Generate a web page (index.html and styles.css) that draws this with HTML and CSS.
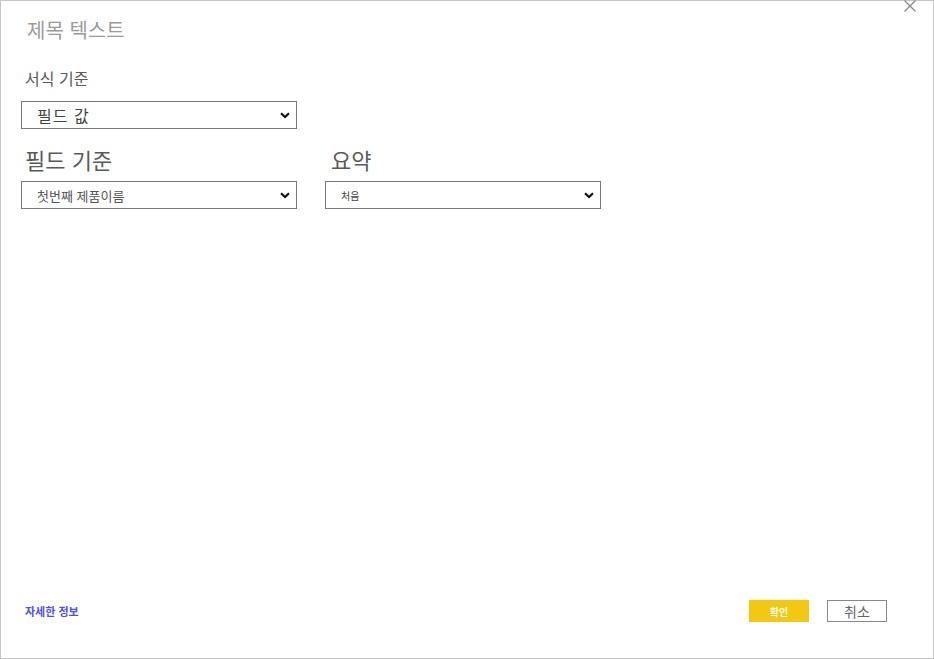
FILE: index.html
```html
<!DOCTYPE html>
<html lang="ko">
<head>
<meta charset="utf-8">
<link rel="stylesheet" href="styles.css">
</head>
<body>
<div class="dialog">
  <button class="close" aria-label="닫기">
    <svg width="12" height="12" viewBox="0 0 12 12"><path d="M0.5 0.5 L11.5 11.5 M11.5 0.5 L0.5 11.5" stroke="#888" stroke-width="1.3" fill="none"/></svg>
  </button>
  <h1 class="title">제목 텍스트</h1>
  <div class="label">서식 기준</div>
  <div class="select select-lg">
    <span class="select-text">필드 값</span>
    <svg class="chev" width="10" height="7" viewBox="0 0 10 7"><path d="M1 1.2 L5 5 L9 1.2" stroke="#111" stroke-width="2.2" fill="none"/></svg>
  </div>
  <div class="row">
    <div class="col">
      <div class="label-big">필드 기준</div>
      <div class="select select-md">
        <span class="select-text">첫번째 제품이름</span>
        <svg class="chev" width="10" height="7" viewBox="0 0 10 7"><path d="M1 1.2 L5 5 L9 1.2" stroke="#111" stroke-width="2.2" fill="none"/></svg>
      </div>
    </div>
    <div class="col">
      <div class="label-big">요약</div>
      <div class="select select-sm">
        <span class="select-text">처음</span>
        <svg class="chev" width="10" height="7" viewBox="0 0 10 7"><path d="M1 1.2 L5 5 L9 1.2" stroke="#111" stroke-width="2.2" fill="none"/></svg>
      </div>
    </div>
  </div>
  <div class="footer">
    <a class="link" href="#">자세한 정보</a>
    <div class="buttons">
      <button class="btn btn-primary">확인</button>
      <button class="btn btn-secondary">취소</button>
    </div>
  </div>
</div>
</body>
</html>
```
FILE: styles.css
```css
html, body {
  margin: 0;
  padding: 0;
  background: #fff;
}
body {
  font-family: "Noto Sans CJK KR", "Noto Sans", sans-serif;
}
.dialog {
  position: relative;
  box-sizing: border-box;
  width: 934px;
  height: 659px;
  border: 1px solid #c6c6c6;
  display: flex;
  flex-direction: column;
  padding: 0 0 0 20px;
}
.close {
  position: absolute;
  top: -1px;
  right: 17px;
  width: 12px;
  height: 12px;
  padding: 0;
  border: 0;
  background: none;
  display: block;
}
.close svg { display: block; }
.title {
  margin: 17px 0 0 6px;
  font-size: 20px;
  line-height: 24px;
  font-weight: 400;
  color: #9a9a9a;
}
.label {
  margin: 26px 0 0 4px;
  font-size: 16px;
  line-height: 20px;
  color: #5a5a5a;
}
.select {
  box-sizing: border-box;
  width: 276px;
  height: 28px;
  border: 1px solid #777;
  display: flex;
  align-items: center;
  justify-content: space-between;
  padding: 0 4px 0 15px;
  color: #444;
}
.select-lg { margin-top: 13px; }
.select-lg .select-text { font-size: 16px; letter-spacing: 1px; }
.select-md .select-text { font-size: 13px; color: #555; }
.select-sm { padding-left: 15px; }
.select-sm .select-text { font-size: 10px; color: #444; }
.chev { display: block; margin-right: 2px; }
.row {
  display: flex;
  gap: 28px;
  margin-top: 17px;
}
.col { display: flex; flex-direction: column; }
.label-big {
  margin-left: 4px;
  font-size: 22px;
  line-height: 26px;
  color: #5a5a5a;
  margin-bottom: 9px;
}
.col + .col .label-big { margin-left: 6px; }
.footer {
  margin-top: auto;
  margin-bottom: 36px;
  display: flex;
  align-items: center;
  justify-content: space-between;
  padding-right: 46px;
}
.link {
  margin-left: 4px;
  font-size: 11px;
  font-weight: 700;
  color: #4f4ff0;
  text-decoration: none;
}
.buttons {
  display: flex;
  gap: 18px;
}
.btn {
  box-sizing: border-box;
  width: 60px;
  height: 22px;
  padding: 0;
  font-family: "Noto Sans CJK KR", "Noto Sans", sans-serif;
  display: flex;
  align-items: center;
  justify-content: center;
}
.btn-primary {
  background: #f2c811;
  border: 0;
  color: #fff;
  font-size: 10px;
  font-weight: 700;
}
.btn-secondary {
  background: #fff;
  border: 1px solid #888;
  color: #666;
  font-size: 14px;
}
```
